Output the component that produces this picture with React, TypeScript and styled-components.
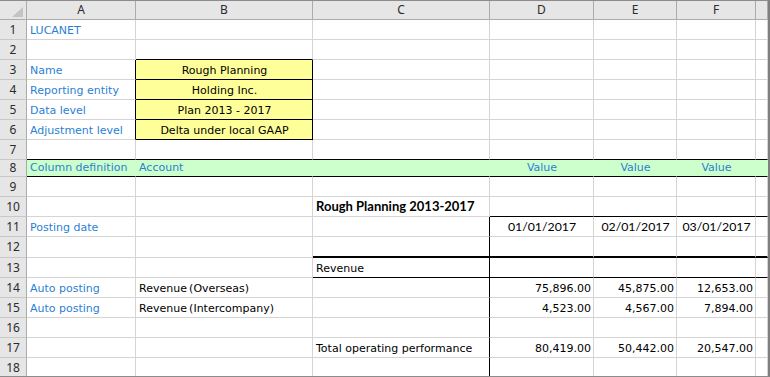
import React from 'react';
import styled, { createGlobalStyle } from 'styled-components';

const GRIDLINE = '#d4d4d4';
const INK = '#000';
const LABEL = '#2b7fd4';
const YELLOW = '#ffff99';
const GREEN = '#ccffcc';
const HEAD_BG = '#e6e6e6';
const HEAD_LINE = '#ababab';

const GlobalStyle = createGlobalStyle`
  html, body { margin: 0; padding: 0; background: #fff; }
  *, *::before, *::after { box-sizing: border-box; }
`;

const Sheet = styled.div`
  width: 770px;
  height: 377px;
  overflow: hidden;
  background: #fff;
  border-top: 1px solid #8c8c8c;
  border-right: 2px solid #7f7f7f;
  border-bottom: 1px solid #8c8c8c;
`;

const Grid = styled.div`
  display: grid;
  grid-template-columns: 27px 109px 177px 177px 104px 83px 79px 12px;
  grid-template-rows: 19px repeat(7, 20px) 17px repeat(3, 20px) 21px repeat(6, 20px);
`;

const Corner = styled.div`
  display: flex;
  align-items: flex-end;
  justify-content: flex-end;
  padding: 0 3px 2px 0;
  background: ${HEAD_BG};
  border-right: 1px solid ${HEAD_LINE};
  border-bottom: 1px solid ${HEAD_LINE};
`;

const ColHead = styled.div`
  display: flex;
  align-items: center;
  justify-content: center;
  background: ${HEAD_BG};
  border-right: 1px solid ${HEAD_LINE};
  border-bottom: 1px solid ${HEAD_LINE};
  font-family: 'Noto Sans', 'DejaVu Sans', sans-serif;
  font-size: 12px;
  color: #2b2b2b;
  line-height: 1;
`;

const RowHead = styled.div`
  display: flex;
  align-items: center;
  justify-content: center;
  background: ${HEAD_BG};
  border-right: 1px solid ${HEAD_LINE};
  border-bottom: 1px solid #c8c8c8;
  font-family: 'Noto Sans', 'DejaVu Sans', sans-serif;
  font-size: 12px;
  color: #2b2b2b;
  line-height: 1;
`;

type Face = 'tahoma' | 'calibri';
type Align = 'left' | 'center' | 'right';

const fontSize = (face: Face, bold: boolean) =>
  face === 'calibri' ? (bold ? 13 : 12.3) : 11;

const Cell = styled.div<{
  $align: Align;
  $fill: string;
  $bb: string;
  $bbw: number;
  $br: string;
  $face: Face;
  $bold: boolean;
  $blue: boolean;
}>`
  display: flex;
  align-items: flex-end;
  justify-content: ${(p) =>
    p.$align === 'center' ? 'center' : p.$align === 'right' ? 'flex-end' : 'flex-start'};
  padding: 0 2px ${(p) => (p.$face === 'calibri' ? 2 : 1)}px 3px;
  background: ${(p) => p.$fill};
  border-right: 1px solid ${(p) => p.$br};
  border-bottom: ${(p) => p.$bbw}px solid ${(p) => p.$bb};
  font-family: ${(p) =>
    p.$face === 'calibri' ? "Lato, 'Liberation Sans', sans-serif" : "'DejaVu Sans', sans-serif"};
  font-size: ${(p) => fontSize(p.$face, p.$bold)}px;
  font-weight: ${(p) => (p.$bold ? 700 : 400)};
  line-height: 15px;
  color: ${(p) => (p.$blue ? LABEL : '#000')};
  white-space: nowrap;
  overflow: visible;
  min-width: 0;
`;

interface Spec {
  text?: string;
  align?: Align;
  fill?: string;
  bb?: string;
  bbw?: number;
  br?: string;
  face?: Face;
  bold?: boolean;
  blue?: boolean;
}

const COLS = ['A', 'B', 'C', 'D', 'E', 'F', 'G'];

const blank = (): Spec[] => COLS.map(() => ({}));

function buildRows(): Spec[][] {
  const rows: Spec[][] = Array.from({ length: 18 }, blank);
  const r = (n: number) => rows[n - 1];

  r(1)[0] = { text: 'LUCANET', blue: true };
  r(2)[1] = { bb: INK };

  const header: [string, string][] = [
    ['Name', 'Rough Planning'],
    ['Reporting entity', 'Holding Inc.'],
    ['Data level', 'Plan 2013 - 2017'],
    ['Adjustment level', 'Delta under local GAAP'],
  ];
  header.forEach(([label, value], i) => {
    const row = r(3 + i);
    row[0] = { text: label, blue: true, br: INK };
    row[1] = { text: value, align: 'center', fill: YELLOW, br: INK, bb: INK };
  });

  r(7).forEach((c, i) => (r(7)[i] = { ...c, bb: INK }));

  r(8).forEach((_, i) => {
    r(8)[i] = { fill: GREEN, bb: INK, br: GREEN, blue: true };
  });
  r(8)[0].text = 'Column definition';
  r(8)[1].text = 'Account';
  [3, 4, 5].forEach((i) => {
    r(8)[i].text = 'Value';
    r(8)[i].align = 'center';
  });

  r(10)[2] = { text: 'Rough Planning 2013-2017', face: 'calibri', bold: true };
  [3, 4, 5, 6].forEach((i) => (r(10)[i] = { bb: INK }));

  r(11)[0] = { text: 'Posting date', blue: true };
  ['01/01/2017', '02/01/2017', '03/01/2017'].forEach((d, i) => {
    r(11)[3 + i] = { text: d, align: 'center', face: 'calibri' };
  });

  [2, 3, 4, 5, 6].forEach((i) => {
    r(12)[i] = { ...r(12)[i], bb: INK, bbw: 2 };
    r(13)[i] = { ...r(13)[i], bb: INK };
  });
  r(13)[2].text = 'Revenue';

  const figures: [number, string, string, string[]][] = [
    [14, 'Auto posting', 'Revenue\u2009(Overseas)', ['75,896.00', '45,875.00', '12,653.00']],
    [15, 'Auto posting', 'Revenue\u2009(Intercompany)', ['4,523.00', '4,567.00', '7,894.00']],
  ];
  figures.forEach(([n, label, account, values]) => {
    r(n)[0] = { text: label, blue: true };
    r(n)[1] = { text: account };
    values.forEach((v, i) => (r(n)[3 + i] = { text: v, align: 'right' }));
  });

  r(17)[2] = { text: 'Total operating performance' };
  ['80,419.00', '50,442.00', '20,547.00'].forEach((v, i) => {
    r(17)[3 + i] = { text: v, align: 'right' };
  });

  for (let n = 11; n <= 18; n++) r(n)[2] = { ...r(n)[2], br: INK };

  return rows;
}

const ROWS = buildRows();

const SelectAll = () => (
  <svg width="11" height="10" viewBox="0 0 11 10">
    <polygon points="11,0 11,10 0,10" fill="#c4c4c4" />
  </svg>
);

export default function App() {
  return (
    <>
      <GlobalStyle />
      <Sheet>
        <Grid>
          <Corner>
            <SelectAll />
          </Corner>
          {COLS.map((c) => (
            <ColHead key={c}>{c === 'G' ? '' : c}</ColHead>
          ))}
          {ROWS.map((row, ri) => (
            <React.Fragment key={ri}>
              <RowHead>{ri + 1}</RowHead>
              {row.map((s, ci) => (
                <Cell
                  key={ci}
                  $align={s.align ?? 'left'}
                  $fill={s.fill ?? '#fff'}
                  $bb={s.bb ?? GRIDLINE}
                  $bbw={s.bbw ?? 1}
                  $br={s.br ?? GRIDLINE}
                  $face={s.face ?? 'tahoma'}
                  $bold={!!s.bold}
                  $blue={!!s.blue}
                >
                  {s.text}
                </Cell>
              ))}
            </React.Fragment>
          ))}
        </Grid>
      </Sheet>
    </>
  );
}
